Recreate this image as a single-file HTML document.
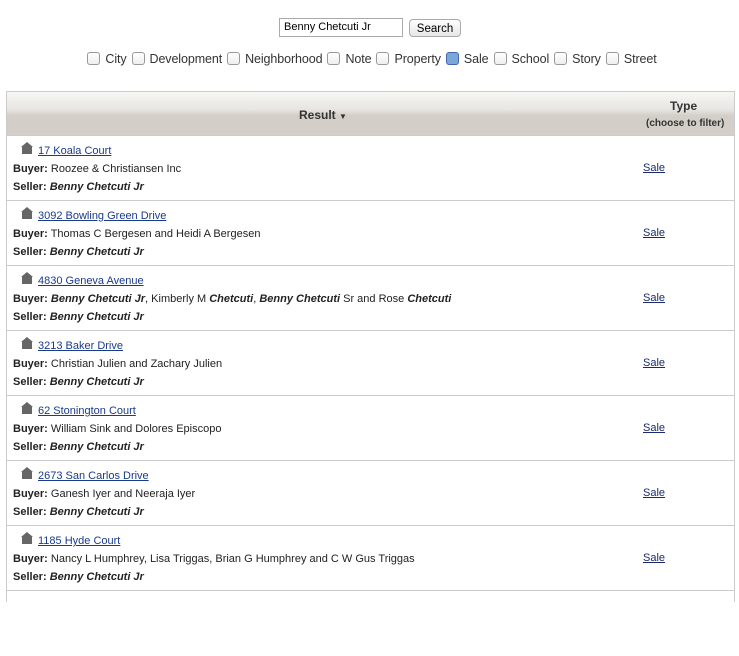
<!DOCTYPE html>
<html><head><meta charset="utf-8"><style>
body{margin:0;width:739px;height:596px;overflow:hidden;background:#fff;font-family:"Liberation Sans",sans-serif;color:#222;}
.abs{position:absolute}
#inp{left:279px;top:18px;font-size:11px;line-height:17px;padding-left:4px;box-sizing:border-box;width:124px;height:19px;border:1px solid #aaa;color:#000}
#btn{left:409px;top:19px;width:52px;height:18px;border:1px solid #aaa;border-radius:4px;background:linear-gradient(#fff,#e6e6e6);font-size:11.5px;text-align:center;line-height:18px;box-sizing:border-box;color:#000}
#filters{left:0;width:739px;top:52px;text-align:center;font-size:12.5px;color:#333;white-space:nowrap;letter-spacing:-0.1px}
.cb{display:inline-block;width:11px;height:11px;border:1px solid #999;border-radius:3px;vertical-align:-2px;margin:0 5px 0 5px;background:linear-gradient(#fff,#eee)}
#tbl{left:6px;top:91px;width:727px;height:510px;border:1px solid #ccc;border-bottom:none}
#hd{left:0;top:0;width:727px;height:43px;background:linear-gradient(#f6f6f4 0%,#e8e6e2 40%,#d3cfc8 55%,#d3cfc8 100%);}
.row{position:absolute;left:0;width:727px;height:65px;border-top:1px solid #ccc;font-size:11px;}
.row .l{position:absolute;left:31px;top:9px;color:#1a3a8a;text-decoration:underline}
.row .b{position:absolute;left:6px;top:27px}
.row .s{position:absolute;left:6px;top:45px}
.row .t{position:absolute;left:636px;top:26px;color:#1a2a6a;text-decoration:underline}
.house{position:absolute;left:14px;top:6px;width:12px;height:12px}
b{font-weight:bold}
</style></head><body>
<div class="abs" id="inp">Benny Chetcuti Jr</div>
<div class="abs" id="btn">Search</div>
<div class="abs" id="filters"><span class="cb"></span>City<span class="cb"></span>Development<span class="cb"></span>Neighborhood<span class="cb"></span>Note<span class="cb"></span>Property<span class="cb" style="background:#7aa6d8;border-color:#46a"></span>Sale<span class="cb"></span>School<span class="cb"></span>Story<span class="cb"></span>Street</div>
<div class="abs" id="tbl">
<div class="abs" id="hd">
<div class="abs" style="left:292px;top:16px;font-size:12px;font-weight:bold;color:#333">Result <span style="font-size:8px">▼</span></div>
<div class="abs" style="left:663px;top:7px;font-size:12px;font-weight:bold;color:#333">Type</div>
<div class="abs" style="left:639px;top:26px;font-size:10px;font-weight:bold;color:#333">(choose to filter)</div>
</div>
<div class="row" style="top:43px"><svg class="house" viewBox="0 0 12 12"><path d="M6 0L0 5H12Z M1 5H11V12H1Z" fill="#666"/></svg><span class="l">17 Koala Court</span><span class="b"><b>Buyer:</b> Roozee &amp; Christiansen Inc</span><span class="s"><b>Seller:</b> <b><i>Benny Chetcuti Jr</i></b></span><span class="t">Sale</span></div>
<div class="row" style="top:108px"><svg class="house" viewBox="0 0 12 12"><path d="M6 0L0 5H12Z M1 5H11V12H1Z" fill="#666"/></svg><span class="l">3092 Bowling Green Drive</span><span class="b"><b>Buyer:</b> Thomas C Bergesen and Heidi A Bergesen</span><span class="s"><b>Seller:</b> <b><i>Benny Chetcuti Jr</i></b></span><span class="t">Sale</span></div>
<div class="row" style="top:173px"><svg class="house" viewBox="0 0 12 12"><path d="M6 0L0 5H12Z M1 5H11V12H1Z" fill="#666"/></svg><span class="l">4830 Geneva Avenue</span><span class="b"><b>Buyer:</b> <b><i>Benny Chetcuti Jr</i></b>, Kimberly M <b><i>Chetcuti</i></b>, <b><i>Benny Chetcuti</i></b> Sr and Rose <b><i>Chetcuti</i></b></span><span class="s"><b>Seller:</b> <b><i>Benny Chetcuti Jr</i></b></span><span class="t">Sale</span></div>
<div class="row" style="top:238px"><svg class="house" viewBox="0 0 12 12"><path d="M6 0L0 5H12Z M1 5H11V12H1Z" fill="#666"/></svg><span class="l">3213 Baker Drive</span><span class="b"><b>Buyer:</b> Christian Julien and Zachary Julien</span><span class="s"><b>Seller:</b> <b><i>Benny Chetcuti Jr</i></b></span><span class="t">Sale</span></div>
<div class="row" style="top:303px"><svg class="house" viewBox="0 0 12 12"><path d="M6 0L0 5H12Z M1 5H11V12H1Z" fill="#666"/></svg><span class="l">62 Stonington Court</span><span class="b"><b>Buyer:</b> William Sink and Dolores Episcopo</span><span class="s"><b>Seller:</b> <b><i>Benny Chetcuti Jr</i></b></span><span class="t">Sale</span></div>
<div class="row" style="top:368px"><svg class="house" viewBox="0 0 12 12"><path d="M6 0L0 5H12Z M1 5H11V12H1Z" fill="#666"/></svg><span class="l">2673 San Carlos Drive</span><span class="b"><b>Buyer:</b> Ganesh Iyer and Neeraja Iyer</span><span class="s"><b>Seller:</b> <b><i>Benny Chetcuti Jr</i></b></span><span class="t">Sale</span></div>
<div class="row" style="top:433px"><svg class="house" viewBox="0 0 12 12"><path d="M6 0L0 5H12Z M1 5H11V12H1Z" fill="#666"/></svg><span class="l">1185 Hyde Court</span><span class="b"><b>Buyer:</b> Nancy L Humphrey, Lisa Triggas, Brian G Humphrey and C W Gus Triggas</span><span class="s"><b>Seller:</b> <b><i>Benny Chetcuti Jr</i></b></span><span class="t">Sale</span></div>
<div class="row" style="top:498px"></div>
</div>
</body></html>
